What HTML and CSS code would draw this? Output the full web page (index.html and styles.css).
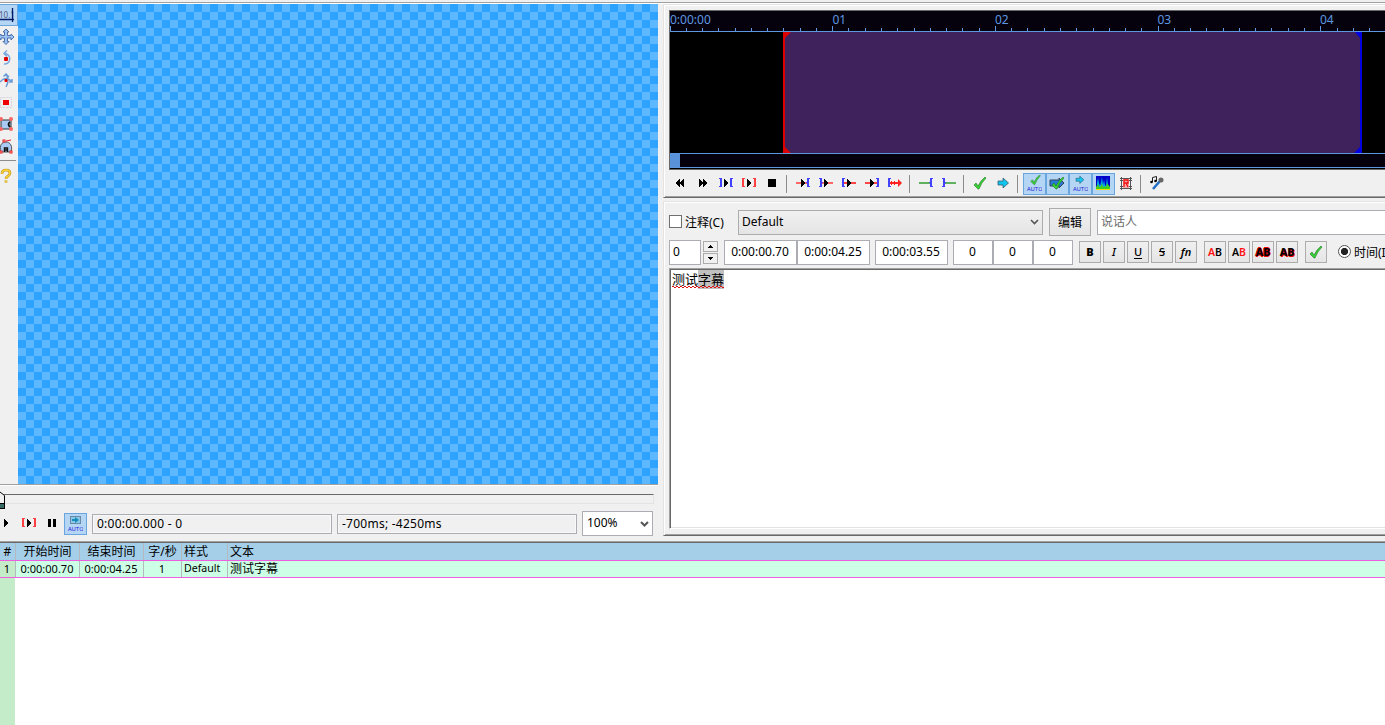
FILE: index.html
```html
<!DOCTYPE html>
<html lang="zh-CN">
<head>
    <meta charset="UTF-8">
    <title>字幕编辑器</title>
    <link rel="stylesheet" href="styles.css">
</head>
<body>
    <svg width="0" height="0" class="defs">
        <defs>
            <path id="tri" d="M0 0h1v1h1v1h1v1h1v2h-1v1h-1v1h-1v1h-1z"/>
            <path id="open" d="M0 0h3v1h-1v7h1v1h-3z"/>
            <path id="brace" d="M1 0h3v1h-1v7h1v1h-3v-4h-1v-1h1z"/>
            <path id="tick" d="M1 8l2-2 2 3q3-6 7-9l1 1q-5 5-7 11h-1z"/>
            <path id="arrow" d="M0 3h5v-3l5.500 5-5.500 5v-3h-5z"/>
        </defs>
    </svg>
    <div class="workspace">
        <section class="video-pane">
            <div class="video-area">
                <div class="tools">
                    <button class="tool on"><svg width="18" height="20"><text x="-1" y="13" font-size="8" fill="#4a5878">10.1</text><path d="M12.500 3v14M0 14.500h14" stroke="#001a66" stroke-width="1.300"/></svg></button>
                    <button class="tool"><svg width="18" height="20"><path d="M6 3l3 3H7.500v3.500h3.500V8l3 3-3 3v-2H7.500v3.500H9l-3 3-3-3h1.500V12H1v2l-3-3 3-3v1.500h3.500V6H3z" fill="#9fc2f4" stroke="#4068a8" stroke-width=".9"/></svg></button>
                    <button class="tool"><svg width="18" height="20"><path d="M5 5.500a5.200 5.200 0 1 1-1 10.500M7 2.500L4 5.500l3 3" fill="none" stroke="#78a8e0" stroke-width="1.500"/><rect x="4" y="9" width="4" height="4" rx="1" fill="#e00000"/></svg></button>
                    <button class="tool"><svg width="18" height="20"><path d="M0 12q6-7 12 0M6 4q4 6 0 13M3.500 6.500L6 4l3 3M9 12h3V9" fill="none" stroke="#6e9dd5" stroke-width="1.500"/><rect x="4.500" y="9" width="3" height="3" rx="1" fill="#e00000"/></svg></button>
                    <button class="tool"><svg width="18" height="20"><rect x=".5" y="5.500" width="11" height="10" fill="none" stroke="#d4d4de" stroke-dasharray="2 1"/><rect x="3" y="8" width="6" height="5" fill="#f00000"/></svg></button>
                    <button class="tool"><svg width="18" height="20"><rect x="1" y="6" width="10" height="9" fill="#a9cbf3" stroke="#333"/><path d="M10 8q-3 2 0 5" fill="none" stroke="#111" stroke-width="1.800"/><g fill="#fa6666"><circle cx="1" cy="5" r="2"/><circle cx="11" cy="5" r="2"/><circle cx="1" cy="15" r="2"/><circle cx="11" cy="15" r="2"/></g></svg></button>
                    <button class="tool"><svg width="18" height="20"><path d="M1 16C-1 9 2 6 6 6s7 4 5 10z" fill="#a9cbf3" stroke="#555"/><path d="M4.500 16v-4h3v4M4 14h4" stroke="#111" fill="none" stroke-width="1.400"/><g fill="#fff" stroke="#ee1c1c"><rect x="0" y="15" width="2" height="2"/><rect x="10" y="15" width="2" height="2"/><rect x="3" y="4" width="2" height="2"/></g><path d="M6 5l5-1" stroke="#ee1c1c"/></svg></button>
                    <div class="tool-line"></div>
                    <button class="tool"><svg width="18" height="20"><path d="M2 8q0-4 4-4t4 3q0 2-2 3t-2 3M6 14.500v2" fill="none" stroke="#b88a12" stroke-width="2.600"/><path d="M2 8q0-4 4-4t4 3q0 2-2 3t-2 3M6 14.500v2" fill="none" stroke="#ffd83a" stroke-width="1.400"/></svg></button>
                </div>
                <div class="video"></div>
            </div>
            <div class="slider">
                <div class="track"></div>
                <svg class="thumb" width="5" height="18"><path d="M0 0l4 4v13H0z" fill="#f0f0f0"/><path d="M0 13h4v4H0z" fill="#356a64"/><path d="M0 1l4.500 3.500V17M0 12.500h4M0 17.500h5" stroke="#000" fill="none"/></svg>
            </div>
            <div class="video-controls">
                <button class="tool-btn play"><svg width="12" height="16"><use href="#tri" x="4" y="4"/></svg></button>
                <button class="tool-btn"><svg width="16" height="16"><use href="#open" x="1" y="3" fill="#ff4040"/><use href="#open" fill="#ff4040" transform="translate(15 3) scale(-1 1)"/><use href="#tri" x="6" y="4"/></svg></button>
                <button class="tool-btn"><svg width="16" height="16"><path d="M4 4h3v8H4zM9 4h3v8H9z"/></svg></button>
                <button class="tool-btn on"><svg width="16" height="18"><rect x="3.500" y="2.500" width="10" height="7" fill="#8bc7e9" stroke="#698ba8"/><path d="M5 5h3V3l4 3-4 3V7H5z" fill="#138db8"/><text x="1" y="17" class="auto">AUTO</text></svg></button>
                <div class="status">0:00:00.000 - 0</div>
                <div class="status wide">-700ms; -4250ms</div>
                <div class="zoom-select">100%<svg width="9" height="7"><path d="M1 1l3.500 3.500L8 1" fill="none" stroke="#555" stroke-width="2"/></svg></div>
            </div>
        </section>

        <div class="right">
            <section class="audio-pane">
                <div class="audio-display">
                    <div class="timeline">
                        <span>0:00:00</span><span>01</span><span>02</span><span>03</span><span>04</span>
                        <svg id="ticks" width="715" height="5"></svg>
                    </div>
                    <svg class="wave" width="715" height="121">
                        <rect x="113" width="579" height="121" fill="#3f215c"/>
                        <path d="M113 0h8l-6 6v109l6 6h-8z" fill="#dc0000"/>
                        <path d="M692 0h-7l5 6v109l-6 6h8z" fill="#0000e0"/>
                    </svg>
                    <div class="scroll"><div class="scroll-thumb"></div></div>
                </div>
                <div class="audio-tools">
                    <button class="tool-btn"><svg width="16" height="16"><use href="#tri" transform="translate(8 4) scale(-1 1)"/><use href="#tri" transform="translate(12 4) scale(-1 1)"/></svg></button>
                    <button class="tool-btn"><svg width="16" height="16"><use href="#tri" x="4" y="4"/><use href="#tri" x="8" y="4"/></svg></button>
                    <button class="tool-btn"><svg width="16" height="16"><g fill="#4242ff"><use href="#open" transform="translate(4 3) scale(-1 1)"/><use href="#open" x="12" y="3"/></g><use href="#tri" x="6" y="4"/></svg></button>
                    <button class="tool-btn"><svg width="16" height="16"><g fill="#ff4040"><use href="#open" x="1" y="3"/><use href="#open" transform="translate(15 3) scale(-1 1)"/></g><use href="#tri" x="6" y="4"/></svg></button>
                    <button class="tool-btn"><svg width="16" height="16"><path d="M4 4h8v8H4z"/></svg></button>
                    <i class="sep"></i>
                    <button class="tool-btn"><svg width="16" height="16"><path d="M1 7h11v2H1z" fill="#f66"/><use href="#brace" x="11" y="3" fill="#4242ff"/><use href="#tri" x="6" y="4"/></svg></button>
                    <button class="tool-btn"><svg width="16" height="16"><path d="M4 7h11v2H4z" fill="#f66"/><use href="#brace" transform="translate(5 3) scale(-1 1)" fill="#4242ff"/><use href="#tri" x="6" y="4"/></svg></button>
                    <button class="tool-btn"><svg width="16" height="16"><path d="M2 7h13v2H2z" fill="#f44"/><use href="#open" x="1" y="3" fill="#4242ff"/><use href="#tri" x="6" y="4"/></svg></button>
                    <button class="tool-btn"><svg width="16" height="16"><path d="M1 7h13v2H1z" fill="#f44"/><use href="#open" transform="translate(15 3) scale(-1 1)" fill="#4242ff"/><use href="#tri" x="6" y="4"/></svg></button>
                    <button class="tool-btn"><svg width="16" height="16"><path d="M2 7h9V4l4 4-4 4V9H2z" fill="#f22"/><path d="M4 6h1v4H4zM7 6h1v4H7z" fill="#f22"/><use href="#open" x="1" y="3" fill="#4242ff"/></svg></button>
                    <i class="sep"></i>
                    <button class="tool-btn"><svg width="16" height="16"><path d="M1 7h11v2H1z" fill="#5fb05f"/><use href="#brace" x="11" y="3" fill="#4242ff"/></svg></button>
                    <button class="tool-btn"><svg width="16" height="16"><path d="M4 7h11v2H4z" fill="#5fb05f"/><use href="#brace" transform="translate(5 3) scale(-1 1)" fill="#4242ff"/></svg></button>
                    <i class="sep"></i>
                    <button class="tool-btn"><svg width="16" height="16"><use href="#tick" x="1" y="2" class="green"/></svg></button>
                    <button class="tool-btn"><svg width="16" height="16"><use href="#arrow" x="3" y="3" class="cyan"/></svg></button>
                    <i class="sep"></i>
                    <button class="tool-btn on"><svg width="16" height="18"><use href="#tick" transform="translate(4 1) scale(.8)" class="green"/><text x="1" y="17" class="auto">AUTO</text></svg></button>
                    <button class="tool-btn on"><svg width="16" height="16"><path d="M1 5h9V3l5 5-5 5v-2H1z" fill="#2878d8" stroke="#345"/><use href="#tick" x="2" y="2" class="green"/></svg></button>
                    <button class="tool-btn on"><svg width="16" height="18"><use href="#arrow" transform="translate(4 2) scale(.75)" class="cyan"/><text x="1" y="17" class="auto">AUTO</text></svg></button>
                    <button class="tool-btn on"><svg width="16" height="16"><path d="M1 1h14v14H1z" fill="#0000c8"/><path d="M2 15V8l1-5 1 5 1 3 1-4 1-5 1 8 1-5 1 5 1 1 1-9 1 8 1 1v4z" fill="#00a6e8"/><path d="M1 15v-3l2-3 1 3 2-1 1-3 1 4 2-1 1 1 1-4 3 4v3z" fill="#40d020"/><path d="M1 14h14v1H1z" fill="#f4e000"/></svg></button>
                    <button class="tool-btn"><svg width="16" height="16"><path d="M2 3.500h12M2 5.500h12M2 11.500h12M2 13.500h12M3.500 2v13M12.500 2v13" stroke="#555"/><path d="M5 4h6v9H5z" fill="#f9aaaa"/><path d="M6 12V5h4v3H6M8 8l2 4" stroke="#e11" fill="none" stroke-width="1.300"/></svg></button>
                    <i class="sep"></i>
                    <button class="tool-btn"><svg width="16" height="16"><path d="M3.500 7V2.500l4-1V6" fill="none" stroke="#222"/><circle cx="2.500" cy="7" r="1.300"/><circle cx="6.500" cy="6" r="1.300"/><path d="M4 14l7-8" stroke="#246fc4" stroke-width="2.600"/><circle cx="12" cy="5" r="2.500" fill="#666"/></svg></button>
                </div>
            </section>

            <section class="edit-pane">
                <div class="edit-row first">
                    <label class="comment"><span class="checkbox"></span>注释(C)</label>
                    <div class="style-select">Default<svg width="9" height="7"><path d="M1 1l3.500 3.500L8 1" fill="none" stroke="#555" stroke-width="1.600"/></svg></div>
                    <button class="edit-btn">编辑</button>
                    <div class="actor">说话人</div>
                </div>
                <div class="edit-row second">
                    <div class="field layer">0</div>
                    <div class="spin">
                        <button><svg width="5" height="3"><path d="M2 0h1v1h1v1h1v1H0V2h1V1h1z"/></svg></button>
                        <button><svg width="5" height="3"><path d="M0 0h5v1H4v1H3v1H2V2H1V1H0z"/></svg></button>
                    </div>
                    <div class="field time">0:00:00.70</div>
                    <div class="field time">0:00:04.25</div>
                    <div class="field time duration">0:00:03.55</div>
                    <div class="field margin">0</div>
                    <div class="field margin">0</div>
                    <div class="field margin last">0</div>
                    <div class="format">
                        <button class="bold">B</button>
                        <button class="italic">I</button>
                        <button class="underline">U</button>
                        <button class="strike">S</button>
                        <button class="fn">fn</button>
                    </div>
                    <div class="format colors">
                        <button><b>A</b>B</button>
                        <button>A<b>B</b></button>
                        <button class="outline">AB</button>
                        <button class="shadow">AB</button>
                    </div>
                    <button class="commit"><svg width="16" height="16"><use href="#tick" x="1" y="2" class="green"/></svg></button>
                    <label class="radio"><span></span>时间(I)</label>
                </div>
                <div class="editor"><span class="misspelt">测试<mark>字幕</mark></span></div>
            </section>
        </div>
    </div>

    <div class="grid">
        <div class="grid-row head">
            <span>#</span><span>开始时间</span><span>结束时间</span><span>字/秒</span><span>样式</span><span>文本</span>
        </div>
        <div class="grid-row line">
            <span>1</span><span>0:00:00.70</span><span>0:00:04.25</span><span>1</span><span>Default</span><span>测试字幕</span>
        </div>
        <div class="grid-rest"></div>
    </div>

    <script>
        // ten ticks per second, the full seconds are taller
        const ticks = document.getElementById("ticks");
        let d = "";
        for (let i = 0; i < 44; i++) {
            const h = i % 10 === 0 ? 5 : 3;
            d += `M${Math.floor(i * 16.27)} ${5 - h}h1v${h}h-1z`;
        }
        ticks.innerHTML = `<path d="${d}" fill="#5e97e0"/>`;
    </script>
</body>
</html>
```
FILE: styles.css
```css
* {
    box-sizing: border-box;
}
body {
    margin: 0;
    width: 1385px;
    height: 725px;
    overflow: hidden;
    display: flex;
    flex-direction: column;
    background: #f0f0f0;
    color: #000;
    font-family: "Noto Sans", "Noto Sans CJK SC", sans-serif;
    font-size: 12px;
}
button {
    margin: 0;
    padding: 0;
    border: none;
    background: none;
    font: inherit;
    color: inherit;
}
svg {
    display: block;
    flex: none;
}
.defs {
    position: absolute;
}
.workspace {
    display: flex;
    height: 541px;
    padding-top: 4px;
    background: linear-gradient(#f0f0f0 2px, #a0a0a0 2px, #a0a0a0 3px, #fff 3px, #fff 4px, #f0f0f0 4px);
}

/* video */
.video-pane {
    width: 663px;
    flex: none;
}
.video-area {
    display: flex;
    width: 658px;
    height: 482px;
    border-bottom: 1px solid #fff;
    box-shadow: inset 0 -1px #a0a0a0;
}
.tools {
    width: 18px;
}
.tool {
    display: block;
    width: 18px;
    height: 22px;
    padding-bottom: 2px;
    overflow: hidden;
}
.tool.on {
    background: #b5d5f5;
    border: 1px solid #69a5df;
    border-left: none;
    padding-bottom: 0;
}
.tool-line {
    width: 16px;
    height: 1px;
    margin: 2px 0 5px;
    background: #8c8c8c;
}
.video {
    width: 640px;
    height: 480px;
    background: repeating-conic-gradient(#5eb8ff 0 25%, #2ea2ff 0 50%) 0 0 / 16px 16px;
}
.slider {
    position: relative;
    height: 25px;
    padding-top: 8px;
}
.track {
    width: 654px;
    height: 10px;
    border-top: 1px solid #696969;
    border-bottom: 1px solid #e3e3e3;
    border-right: 1px solid #e3e3e3;
}
.thumb {
    position: absolute;
    left: 0;
    top: 5px;
}
.video-controls {
    display: flex;
    align-items: center;
    height: 25px;
}
.tool-btn {
    display: flex;
    align-items: center;
    justify-content: center;
    width: 23px;
    height: 22px;
    flex: none;
    padding: 0 1px 2px 0;
}
.tool-btn.play {
    width: 18px;
    justify-content: flex-start;
}
.tool-btn.on {
    background: #b5d5f5;
    border: 1px solid #69a5df;
}
.auto {
    font: 5.5px "DejaVu Sans", sans-serif;
    fill: #2525d8;
}
.green {
    fill: #35d435;
    stroke: #247024;
    stroke-width: .6;
}
.cyan {
    fill: #10c4f0;
    stroke: #385a70;
    stroke-width: .8;
}
.status {
    width: 240px;
    height: 20px;
    margin-left: 5px;
    padding-left: 4px;
    line-height: 18px;
    letter-spacing: .25px;
    border: 1px solid #abadb3;
    box-shadow: inset 0 0 0 1px #f8f8f8;
}
.zoom-select {
    display: flex;
    align-items: center;
    justify-content: space-between;
    width: 71px;
    height: 25px;
    margin-left: 5px;
    padding: 0 3px 2px 4px;
    background: #fff;
    border: 1px solid #abadb3;
}
.zoom-select svg {
    margin-top: 3px;
}

/* audio */
.right {
    flex: 1;
    min-width: 0;
    overflow: hidden;
}
.audio-pane {
    height: 194px;
    padding: 4px 0 0 5px;
    border-top: 1px solid #e3e3e3;
    border-left: 1px solid #e3e3e3;
    border-bottom: 1px solid #696969;
    box-shadow: inset 1px 1px #fff, inset 0 -1px #a0a0a0;
}
.audio-display {
    height: 160px;
    border: 1px solid #696969;
    border-right: none;
    margin-top: 1px;
    background: #000;
}
.timeline {
    position: relative;
    display: flex;
    height: 21px;
    background: #05020d;
    border-bottom: 1px solid #5e97e0;
    color: #5e97e0;
    line-height: 18px;
}
.timeline span {
    width: 162.5px;
    flex: none;
}
.timeline svg {
    position: absolute;
    left: 0;
    bottom: 0;
}
.scroll {
    height: 15px;
    border-top: 1px solid #5e97e0;
    border-bottom: 1px solid #5e97e0;
    background: #05020d;
}
.scroll-thumb {
    width: 10px;
    height: 13px;
    background: #5a92da;
}
.audio-tools {
    display: flex;
    padding-top: 3px;
}
.sep {
    width: 1px;
    height: 18px;
    margin: 2px 5px 0 2px;
    background: #8c8c8c;
}

/* edit box */
.edit-pane {
    height: 335px;
    margin-top: 3px;
    padding: 7px 0 0 5px;
    border-top: 1px solid #e3e3e3;
    border-left: 1px solid #e3e3e3;
    border-bottom: 1px solid #696969;
    box-shadow: inset 1px 1px #fff, inset 0 -1px #a0a0a0;
}
.edit-row {
    display: flex;
    align-items: center;
    white-space: nowrap;
}
.edit-row.first {
    height: 26px;
}
.comment {
    display: flex;
    align-items: center;
    width: 69px;
    padding-bottom: 1px;
    gap: 3px;
}
.checkbox {
    width: 13px;
    height: 13px;
    border: 1px solid #707070;
    background: #fff;
}
.style-select {
    display: flex;
    align-items: center;
    justify-content: space-between;
    width: 305px;
    height: 25px;
    padding: 0 3px 2px 3px;
    border: 1px solid #acacac;
    background: linear-gradient(#f0f0f0, #e5e5e5);
}
.style-select svg {
    margin-top: 2px;
}
.edit-btn {
    width: 42px;
    height: 28px;
    margin: 0 6px;
    padding-bottom: 1px;
    border: 1px solid #acacac;
    background: linear-gradient(#f0f0f0, #e5e5e5);
}
.actor {
    flex: 1;
    height: 25px;
    padding-left: 3px;
    line-height: 22px;
    border: 1px solid #abadb3;
    border-right: none;
    background: #fff;
    color: #6d6d6d;
}
.edit-row.second {
    height: 25px;
    margin-top: 5px;
    align-items: flex-start;
}
.field {
    height: 25px;
    flex: none;
    padding-right: 1px;
    line-height: 22px;
    text-align: center;
    background: #fff;
    border: 1px solid #abadb3;
}
.layer {
    width: 32px;
    padding-left: 3px;
    text-align: left;
}
.spin {
    width: 15px;
    margin: 1px 6px 0 2px;
}
.spin button {
    display: flex;
    align-items: center;
    justify-content: center;
    width: 15px;
    height: 11px;
    margin-bottom: 1px;
    border: 1px solid #acacac;
}
.time {
    width: 73px;
}
.duration {
    margin: 0 5px;
}
.margin {
    width: 40px;
}
.margin.last {
    margin-right: 6px;
}
.format {
    display: flex;
    gap: 2px;
    margin-top: 1px;
}
.format button,
.commit {
    display: flex;
    align-items: center;
    justify-content: center;
    width: 22px;
    height: 22px;
    flex: none;
    padding-bottom: 1px;
    border: 1px solid #acacac;
    background: linear-gradient(#f0f0f0, #e5e5e5);
    font-size: 11px;
    font-weight: 500;
}
.format .bold {
    font-weight: 900;
}
.format .italic,
.format .fn {
    font-style: italic;
}
.format .fn {
    font-weight: 600;
}
.format .underline {
    text-decoration: underline;
    text-underline-offset: 2px;
}
.format .strike {
    text-decoration: line-through;
}
.format.colors {
    margin-left: 7px;
}
.format.colors button {
    font-size: 10.5px;
    font-weight: 600;
}
.colors b {
    color: #f11;
    font-weight: 600;
}
.format .outline {
    text-shadow: .7px 0 #e00, -.7px 0 #e00, 0 .7px #e00, 0 -.7px #e00;
}
.format .shadow {
    text-shadow: 1px 1px #e00;
}
.format.colors .outline,
.format.colors .shadow {
    font-weight: 800;
}
.commit {
    margin: 1px 11px 0 7px;
}
.radio {
    display: flex;
    align-items: center;
    height: 23px;
    gap: 3px;
}
.radio span {
    width: 13px;
    height: 13px;
    flex: none;
    border: 1px solid #555;
    border-radius: 50%;
    background: radial-gradient(circle, #222 3.2px, #fff 4px);
}
.editor {
    height: 261px;
    margin-top: 3px;
    padding: 1px 0 0 1px;
    border: 1px solid #a0a0a0;
    border-right: none;
    border-bottom-color: #fff;
    background: #fff;
    box-shadow: inset 1px 1px #696969, inset 0 -1px #e3e3e3;
    font-size: 13px;
    line-height: 19px;
}
.misspelt {
    display: inline-block;
    margin-left: 1px;
    height: 19px;
    position: relative;
}
/* red zigzag of the spell checker */
.misspelt::after {
    content: "";
    position: absolute;
    left: 0;
    right: 0;
    bottom: 1px;
    height: 2px;
    background:
        linear-gradient(90deg, #e01010 50%, transparent 50%) 0 0 / 4px 1px repeat-x,
        linear-gradient(90deg, #e01010 50%, transparent 50%) 2px 1px / 4px 1px repeat-x;
}
.misspelt mark {
    display: inline-block;
    height: 19px;
    background: #c0c0c0;
    color: inherit;
}

/* subtitle grid */
.grid {
    flex: 1;
    display: flex;
    flex-direction: column;
    border-top: 1px solid #a0a0a0;
    box-shadow: inset 0 1px #696969;
    padding-top: 1px;
    background: #fff;
}
.grid-row {
    display: grid;
    grid-template-columns: 16px 64px 64px 38px 46px 1fr;
    text-align: center;
    white-space: nowrap;
}
.grid-row span {
    border-right: 1px solid #b4b9be;
}
.grid-row span:nth-child(n+5) {
    padding-left: 2px;
    text-align: left;
}
.grid-row span:last-child {
    border-right: none;
}
.head {
    height: 17px;
    line-height: 18px;
    background: #a5cee8;
}
.line {
    height: 18px;
    line-height: 15px;
    font-size: 11px;
    background: #cdffe6;
    border-top: 1px solid #ee5ee0;
    border-bottom: 1px solid #ee5ee0;
}
.line span {
    padding-right: 1px;
}
.line span:first-child {
    background: #c4ecc9;
}
.line span:nth-child(5) {
    font-size: 10.6px;
}
.line span:last-child {
    font-size: 12px;
}
.grid-rest {
    flex: 1;
    background: linear-gradient(to right, #c4ecc9 15px, #fff 15px);
}
```
